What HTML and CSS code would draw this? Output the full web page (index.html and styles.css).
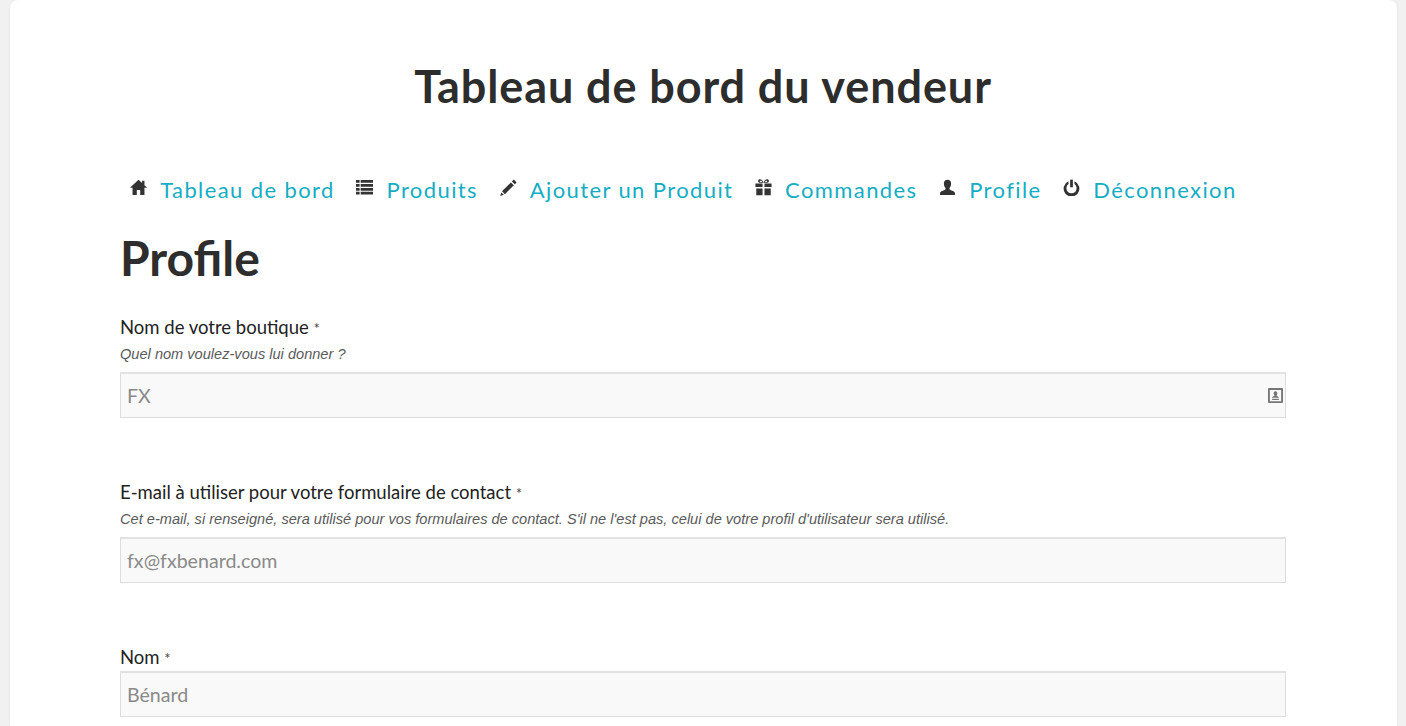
FILE: index.html
```html
<!DOCTYPE html>
<html lang="fr">
<head>
<meta charset="utf-8">
<title>Tableau de bord du vendeur</title>
<link rel="stylesheet" href="styles.css">
</head>
<body>
<main class="card">
  <div class="inner">
    <h1 class="title">Tableau de bord du vendeur</h1>
    <nav class="nav">
      <a class="nav-item"><svg class="ico" viewBox="0 0 16 16"><path d="M8 .8 0 8.2h2.4V15h4v-4.6h3.2V15h4V8.2H16l-2.4-2.3V1.600h-2.200v2.200z"/></svg><span>Tableau de bord</span></a>
      <a class="nav-item"><svg class="ico" viewBox="0 0 16 16"><path d="M0 1h3.400v2.600H0zM4.400 1H16v2.600H4.400zM0 4.700h3.400v2.600H0zM4.400 4.700H16v2.600H4.400zM0 8.400h3.400V11H0zM4.400 8.400H16V11H4.400zM0 12.100h3.400v2.600H0zM4.400 12.100H16v2.600H4.400z"/></svg><span>Produits</span></a>
      <a class="nav-item"><svg class="ico" viewBox="0 0 16 16"><path d="M13 .5l2.700 2.700-1.800 1.800-2.700-2.700zM10.300 3.200 13 5.900 4.600 14.300 1.900 11.600zM1.300 12.600l2.300 2.300L.2 15.900z"/></svg><span>Ajouter un Produit</span></a>
      <a class="nav-item"><svg class="ico" viewBox="0 0 16 16"><path d="M.4 4.200h6.700v3.400H.4zM8.900 4.200h6.700v3.400H8.900zM1.200 8.900h5.900v6.500H1.200zM8.900 8.900h5.900v6.500H8.900z"/><path fill-rule="evenodd" d="M8 3.600C7.300 1.200 5.700 0 4.200.3 2.500.7 2.500 3 4 3.600zM5 1.600c.9-.1 1.500.4 1.700 1.200H4.900c-.6-.2-.6-1.100.1-1.200zM8 3.600C8.700 1.200 10.300 0 11.800.3c1.700.4 1.700 2.700.2 3.300zm3-2c-.9-.1-1.500.4-1.700 1.200h1.800c.6-.2.600-1.100-.1-1.200z"/></svg><span>Commandes</span></a>
      <a class="nav-item"><svg class="ico" viewBox="0 0 16 16"><path d="M8 .6c2.200 0 3.400 1.500 3.400 3.800 0 1.700-.7 3.200-1.500 4-.3.900.2 1.600 1.300 2.100 1.800.7 3.500 1.200 3.800 2.500V15H1v-2c.3-1.300 2-1.800 3.800-2.500 1.100-.5 1.600-1.200 1.300-2.100-.8-.8-1.500-2.300-1.500-4C4.600 2.100 5.800.6 8 .6z"/></svg><span>Profile</span></a>
      <a class="nav-item"><svg class="ico" viewBox="0 0 16 16"><path d="M6.700.6h2.600v7.200H6.700z"/><path d="M5.200 2.200v2.600a4.800 4.800 0 1 0 5.600 0V2.200a7.400 7.400 0 1 1-5.600 0z"/></svg><span>Déconnexion</span></a>
    </nav>
    <h2 class="section">Profile</h2>
    <form class="form">
      <div class="field">
        <label class="label">Nom de votre boutique <span class="req">*</span></label>
        <p class="help">Quel nom voulez-vous lui donner ?</p>
        <div class="input-box"><span class="value">FX</span>
          <svg class="contact" viewBox="0 0 16 16"><path fill-rule="evenodd" d="M1 0h14a1 1 0 0 1 1 1v14a1 1 0 0 1-1 1H1a1 1 0 0 1-1-1V1a1 1 0 0 1 1-1zm1 2v12h12V2z"/><path d="M8 3.400c1.300 0 2 .9 2 2.200 0 .9-.4 1.700-.8 2.100 0 .5.300.8.900 1 .8.300 1.300.5 1.500 1v.7H4.400v-.7c.2-.5.700-.7 1.500-1 .6-.2.900-.5.900-1-.4-.4-.8-1.200-.8-2.100 0-1.300.7-2.200 2-2.200zM4.400 11.500h7.200v1.200H4.400z"/></svg>
        </div>
      </div>
      <div class="field">
        <label class="label">E-mail à utiliser pour votre formulaire de contact <span class="req">*</span></label>
        <p class="help">Cet e-mail, si renseigné, sera utilisé pour vos formulaires de contact. S'il ne l'est pas, celui de votre profil d'utilisateur sera utilisé.</p>
        <div class="input-box"><span class="value">fx@fxbenard.com</span></div>
      </div>
      <div class="field">
        <label class="label">Nom <span class="req">*</span></label>
        <div class="input-box"><span class="value">Bénard</span></div>
      </div>
    </form>
  </div>
</main>
</body>
</html>
```
FILE: styles.css
```css
* { box-sizing: border-box; }
html, body { height: 100%; }
body {
  margin: 0;
  overflow: hidden;
  background: #f1f1f1;
  font-family: "Lato", "Open Sans", sans-serif;
  color: #2d2d2d;
}
.card {
  margin: 0 9px 0 10px;
  min-height: 100%;
  background: #fff;
  border-radius: 8px 8px 0 0;
  box-shadow: 0 0 3px rgba(0, 0, 0, .06);
}
.inner {
  width: 1166px;
  margin-left: 110px;
}
.title {
  margin: 0;
  padding-top: 60px;
  height: 171px;
  font-size: 45px;
  line-height: 52px;
  font-weight: 700;
  letter-spacing: .9px;
  text-align: center;
  color: #2d2d2d;
}
.nav {
  display: flex;
  gap: 21.5px;
  padding-left: 10px;
  height: 40px;
  align-items: flex-start;
}
.nav-item {
  display: flex;
  align-items: flex-start;
  gap: 13.2px;
  font-size: 22px;
  line-height: 38px;
  letter-spacing: 1.4px;
  color: #14adc4;
  white-space: nowrap;
}
.ico {
  width: 17px;
  height: 17px;
  margin-top: 8px;
  fill: #333;
  flex: none;
}
.section {
  margin: 0;
  padding-top: 15px;
  height: 104px;
  font-size: 48px;
  line-height: 64px;
  font-weight: 700;
  color: #2d2d2d;
}
.field { margin-bottom: 62px; }
.label {
  display: block;
  font-size: 18.5px;
  line-height: 25px;
  color: #222;
}
.req { font-size: 15px; color: #444; }
.help {
  margin: 3px 0 8px;
  font-family: "Liberation Sans", Arial, sans-serif;
  font-size: 14.6px;
  line-height: 20px;
  font-style: italic;
  color: #5a5a5a;
}
.input-box {
  display: flex;
  align-items: center;
  justify-content: space-between;
  height: 46px;
  padding: 0 2px 0 6px;
  background: #f9f9f9;
  border: 1px solid #ddd;
  border-top: 2px solid #e2e2e2;
}
.value {
  font-size: 19.6px;
  color: #8a8a8a;
}
.contact {
  width: 15px;
  height: 15px;
  fill: #777;
}
```
